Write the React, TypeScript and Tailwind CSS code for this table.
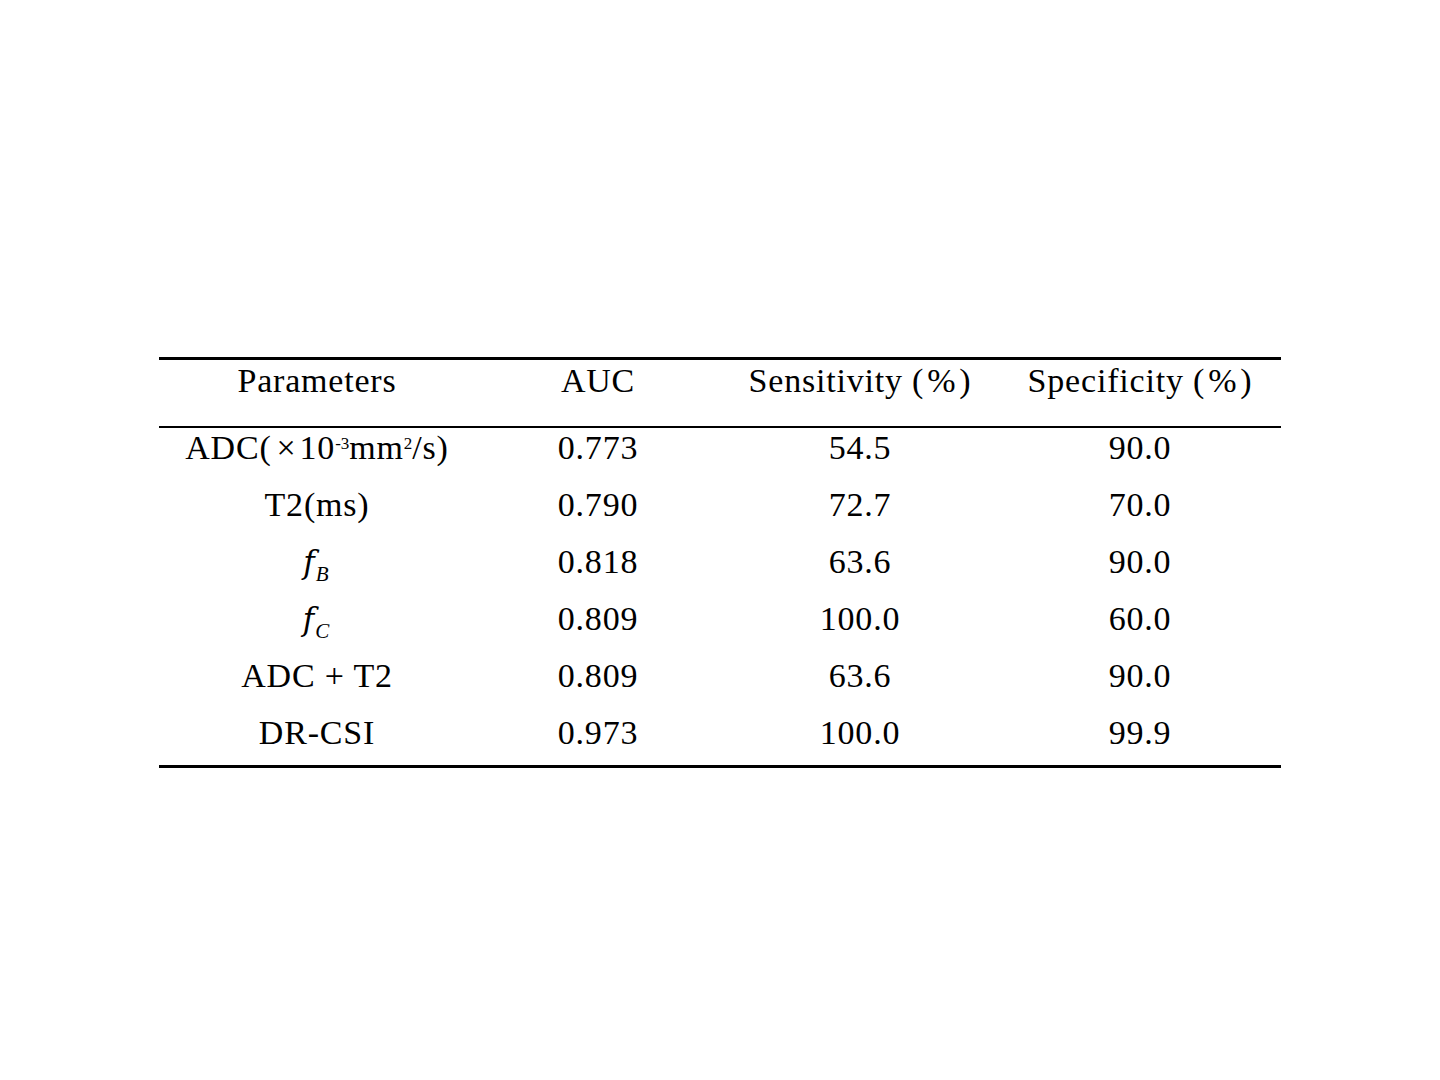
import React from "react";

const serif = { fontFamily: '"Liberation Serif", "Times New Roman", serif' };
const fFont = { fontFamily: '"DejaVu Serif", "Liberation Serif", serif' };

type Row = { p: React.ReactNode; auc: string; sen: string; spe: string };

const Fsub = ({ s }: { s: string }) => (
  <span className="inline-block translate-x-[-1px]">
    <span className="italic text-[31px] tracking-normal" style={fFont}>
      f
    </span>
    <span className="relative top-[8px] italic text-[21px] tracking-normal ml-[1px]">{s}</span>
  </span>
);

const rows: Row[] = [
  {
    p: (
      <span>
        ADC(<span className="ml-[5px] mr-[3px]">×</span>10
        <span className="relative top-[-10px] text-[17px] tracking-normal">-3</span>
        mm
        <span className="relative top-[-10px] text-[17px] tracking-normal">2</span>/s)
      </span>
    ),
    auc: "0.773",
    sen: "54.5",
    spe: "90.0",
  },
  { p: "T2(ms)", auc: "0.790", sen: "72.7", spe: "70.0" },
  { p: <Fsub s="B" />, auc: "0.818", sen: "63.6", spe: "90.0" },
  { p: <Fsub s="C" />, auc: "0.809", sen: "100.0", spe: "60.0" },
  { p: "ADC + T2", auc: "0.809", sen: "63.6", spe: "90.0" },
  { p: "DR-CSI", auc: "0.973", sen: "100.0", spe: "99.9" },
];

const cols = "grid grid-cols-[316px_246px_278px_282px]";

export default function App() {
  return (
    <div className="w-full h-[1080px] bg-white text-black" style={serif}>
      <div className="mx-auto w-[1122px] pt-[357px] text-[34px] tracking-[0.8px] leading-[36px]">
        <div className={`${cols} border-t-[3px] border-b-2 border-black h-[71px] pt-[3px]`}>
          <div className="text-center">Parameters</div>
          <div className="text-center">AUC</div>
          <div className="text-center">
            Sensitivity (<span className="mx-[3px]">%</span>)
          </div>
          <div className="text-center">
            Specificity (<span className="mx-[3px]">%</span>)
          </div>
        </div>
        <div className="border-b-[3px] border-black flex flex-col pt-[2px]">
          {rows.map((r, i) => (
            <div key={i} className={`${cols} ${i === rows.length - 1 ? "h-[50px]" : "h-[57px]"}`}>
              <div className="text-center">{r.p}</div>
              <div className="text-center">{r.auc}</div>
              <div className="text-center">{r.sen}</div>
              <div className="text-center">{r.spe}</div>
            </div>
          ))}
        </div>
      </div>
    </div>
  );
}
